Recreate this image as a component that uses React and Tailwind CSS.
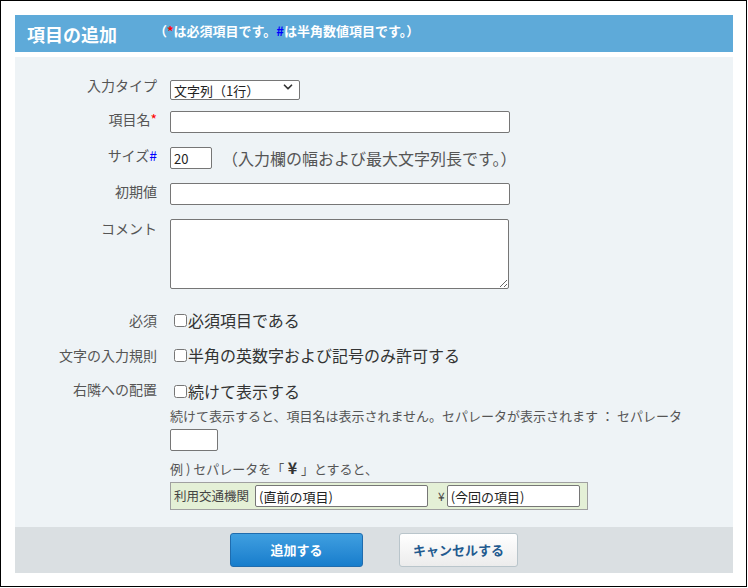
import { ChevronDown } from "lucide-react";

const FONT = { fontFamily: '"Noto Sans CJK JP", "Noto Sans", sans-serif' };

function Label({ children }) {
  return (
    <div className="w-[142px] shrink-0 text-right text-[14px] leading-[17px] text-[#555]">
      {children}
    </div>
  );
}

function TextBox({ className = "", value = "" }) {
  return (
    <input
      type="text"
      defaultValue={value}
      className={
        "h-[22px] border border-[#767676] rounded-[2px] bg-white px-[3px] text-[13px] text-[#222] outline-none " +
        className
      }
    />
  );
}

function CheckRow({ label, text, className = "" }) {
  return (
    <div className={"flex items-center gap-[13px] h-[22px] " + className}>
      <Label>{label}</Label>
      <label className="flex items-center text-[16px] leading-[22px] text-[#333]">
        <input type="checkbox" className="ml-[4px] mr-[1px] w-[13px] h-[13px]" />
        {text}
      </label>
    </div>
  );
}

export default function App() {
  return (
    <div className="w-[747px] h-[587px] border border-black bg-white" style={FONT}>
      <div className="ml-[14px] mt-[14px] w-[718px]">
        {/* ヘッダー */}
        <div className="h-[37px] bg-[#5eaad9] flex items-center pl-[12px]">
          <h1 className="text-[18px] font-bold text-white leading-none">項目の追加</h1>
          <span className="ml-[37px] -mt-[6px] text-[13px] font-bold text-white leading-none">
            （<span className="text-[#ff0000]">*</span>は必須項目です。
            <span className="text-[#0000ff]">#</span>は半角数値項目です。）
          </span>
        </div>

        {/* 本体 */}
        <div className="mt-[5px] h-[470px] bg-[#eef3f6] pt-[20px]">
          <div className="flex items-start gap-[13px]">
            <Label>入力タイプ</Label>
            <div className="relative w-[130px] h-[20px]">
              <select className="w-full h-full appearance-none border border-[#767676] rounded-[2px] bg-white pl-[3px] text-[13px] text-[#222] outline-none">
                <option>文字列（1行）</option>
                <option>文字列（複数行）</option>
                <option>数値</option>
              </select>
              <ChevronDown
                size={14}
                strokeWidth={3}
                className="absolute right-[5px] top-[3px] text-[#333] pointer-events-none"
              />
            </div>
          </div>

          <div className="flex items-start gap-[13px] mt-[14px]">
            <Label>
              項目名<span className="text-[#ff0000]">*</span>
            </Label>
            <TextBox className="w-[340px]" />
          </div>

          <div className="flex items-start gap-[13px] mt-[14px]">
            <Label>
              サイズ<span className="text-[#0000ff]">#</span>
            </Label>
            <TextBox className="w-[42px]" value="20" />
            <span className="-ml-[3px] text-[16px] leading-[22px] text-[#555]">
              （入力欄の幅および最大文字列長です。）
            </span>
          </div>

          <div className="flex items-start gap-[13px] mt-[14px]">
            <Label>初期値</Label>
            <TextBox className="w-[340px]" />
          </div>

          <div className="flex items-start gap-[13px] mt-[14px]">
            <div className="pt-[1px]">
              <Label>コメント</Label>
            </div>
            <textarea className="w-[339px] h-[70px] border border-[#767676] rounded-[2px] bg-white outline-none" />
          </div>

          <CheckRow label="必須" text="必須項目である" className="mt-[20px]" />
          <CheckRow label="文字の入力規則" text="半角の英数字および記号のみ許可する" className="mt-[13px]" />

          <div className="flex items-start gap-[13px] mt-[14px]">
            <div className="pt-[1px]">
              <Label>右隣への配置</Label>
            </div>
            <div className="flex flex-col">
              <label className="flex items-center h-[22px] text-[16px] text-[#333]">
                <input type="checkbox" className="ml-[4px] mr-[1px] w-[13px] h-[13px]" />
                続けて表示する
              </label>
              <p className="mt-[4px] text-[13px] leading-[20px] text-[#555]">
                続けて表示すると、項目名は表示されません。セパレータが表示されます ： セパレータ
              </p>
              <TextBox className="mt-[3px] w-[48px]" />
              <p className="mt-[6px] text-[13px] leading-[20px] text-[#555]">
                例 ) セパレータを「
                <span className="text-[16px] font-bold text-[#333]"> ¥ </span>
                」とすると、
              </p>
              <div className="mt-[3px] w-[418px] h-[28px] border border-[#a0a0a0] bg-[#e4f0d6] flex items-center pl-[3px]">
                <span className="text-[12.5px] text-[#444]">利用交通機関</span>
                <TextBox className="ml-[6px] w-[173px]" value="(直前の項目)" />
                <span className="ml-[10px] mr-[2px] text-[12px] text-[#444]">¥</span>
                <TextBox className="w-[133px]" value="(今回の項目)" />
              </div>
            </div>
          </div>
        </div>

        {/* フッター */}
        <div className="h-[46px] bg-[#dadfe2] flex items-center justify-center gap-[36px]">
          <button className="w-[133px] h-[34px] rounded-[3px] border border-[#1f6cae] bg-gradient-to-b from-[#3f9fe0] to-[#167dcc] text-white text-[13px] font-bold">
            追加する
          </button>
          <button className="w-[119px] h-[34px] rounded-[3px] border border-[#b9c5cb] bg-gradient-to-b from-white to-[#ececec] text-[#1f5a8f] text-[13px] font-bold">
            キャンセルする
          </button>
        </div>
      </div>
    </div>
  );
}
